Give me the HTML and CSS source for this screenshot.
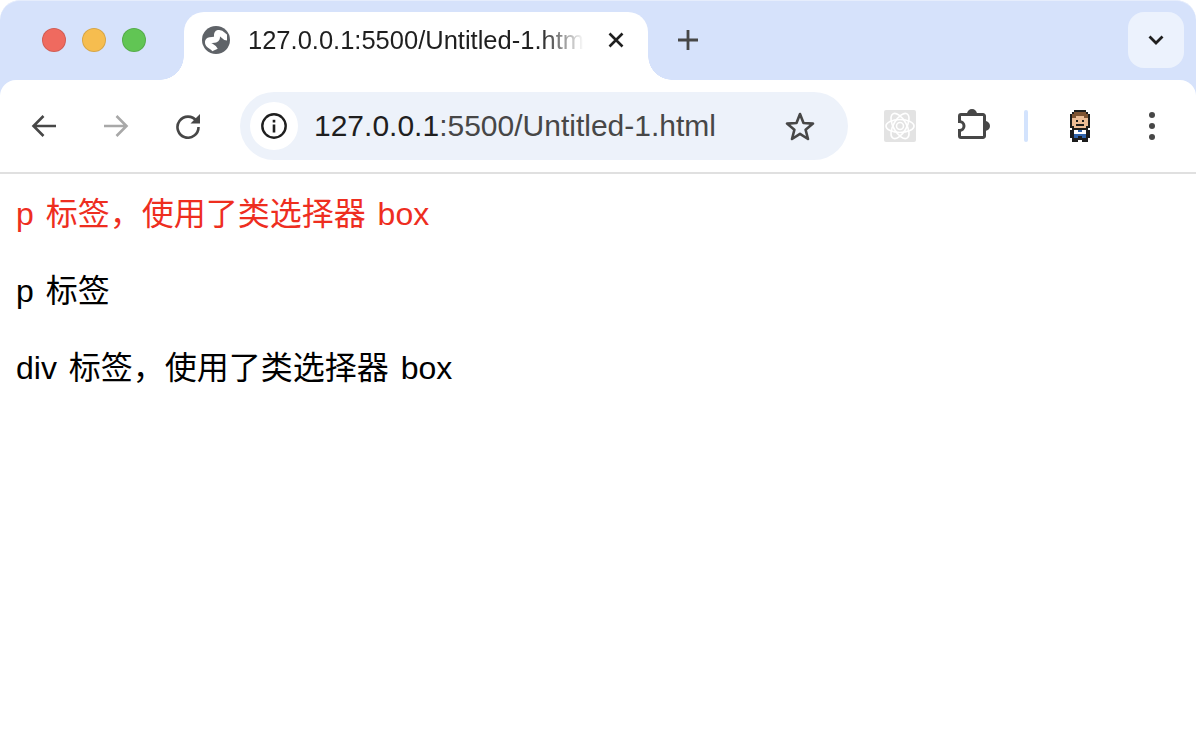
FILE: index.html
```html
<!DOCTYPE html>
<html lang="en">
<head>
    <meta charset="UTF-8">
    <meta name="viewport" content="width=device-width, initial-scale=1.0">
    <title>Untitled-1</title>
    <link rel="stylesheet" href="styles.css">
</head>
<body>
    <div class="browser-chrome">
        <div class="tab-strip">
            <div class="traffic-lights">
                <span class="light light-red"></span>
                <span class="light light-yellow"></span>
                <span class="light light-green"></span>
            </div>
            <div class="tab">
                <svg class="tab-globe" width="28" height="28" viewBox="0 0 28 28">
                    <circle cx="14" cy="14" r="14" fill="#5f6368"/>
                    <path d="M25 11.500 C21 11.500 20.500 6 16.500 7 C13 8 17 12 13.500 13.500 C10 14.500 5.500 13 6 17 C6.500 20.500 11 19.500 13 24" stroke="#fff" stroke-width="6" fill="none"/>
                </svg>
                <span class="tab-title">127.0.0.1:5500/Untitled-1.html</span>
                <svg class="tab-close" width="16" height="16" viewBox="0 0 16 16">
                    <path d="M1.500 1.500 L14.500 14.500 M14.500 1.500 L1.500 14.500" stroke="#1f1f1f" stroke-width="2.600" fill="none"/>
                </svg>
            </div>
            <div class="new-tab">
                <svg width="20" height="20" viewBox="0 0 20 20">
                    <path d="M10 0 V20 M0 10 H20" stroke="#474747" stroke-width="2.800" fill="none"/>
                </svg>
            </div>
            <div class="tab-search">
                <svg width="16" height="10" viewBox="0 0 16 10">
                    <path d="M1.500 1.500 L8 8 L14.500 1.500" stroke="#1f1f1f" stroke-width="2.800" fill="none"/>
                </svg>
            </div>
        </div>

        <div class="toolbar">
            <div class="nav-btn">
                <svg width="26" height="24" viewBox="0 0 26 24">
                    <path d="M25 12 H3 M12.500 2 L2.500 12 L12.500 22" stroke="#474747" stroke-width="2.600" fill="none"/>
                </svg>
            </div>
            <div class="nav-btn">
                <svg width="26" height="24" viewBox="0 0 26 24">
                    <path d="M1 12 H23 M13.500 2 L23.500 12 L13.500 22" stroke="#a8a8a8" stroke-width="2.600" fill="none"/>
                </svg>
            </div>
            <div class="nav-btn">
                <svg width="26" height="26" viewBox="0 0 26 26">
                    <path d="M21.500 8 A10.500 10.500 0 1 0 23.500 14" stroke="#474747" stroke-width="2.600" fill="none"/>
                    <path d="M25 1 V10.500 H15.500 Z" fill="#474747"/>
                </svg>
            </div>

            <div class="address-bar">
                <div class="site-info">
                    <svg width="26" height="26" viewBox="0 0 26 26">
                        <circle cx="13" cy="13" r="11.700" stroke="#1f1f1f" stroke-width="2.400" fill="none"/>
                        <rect x="11.700" y="11.500" width="2.600" height="8" fill="#1f1f1f"/>
                        <rect x="11.700" y="6.800" width="2.600" height="2.700" fill="#1f1f1f"/>
                    </svg>
                </div>
                <div class="url"><span class="url-host">127.0.0.1</span>:5500/Untitled-1.html</div>
                <svg class="star" width="32" height="30" viewBox="0 0 32 30">
                    <path d="M16 3 L19.500 12 L29 12.600 L21.600 18.700 L24 28 L16 22.800 L8 28 L10.400 18.700 L3 12.600 L12.500 12 Z" stroke="#474747" stroke-width="2.600" stroke-linejoin="round" fill="none"/>
                </svg>
            </div>

            <div class="ext-react">
                <svg width="32" height="32" viewBox="0 0 32 32">
                    <g stroke="#fff" stroke-width="1.600" fill="none">
                        <ellipse cx="16" cy="16" rx="14" ry="6.500"/>
                        <ellipse cx="16" cy="16" rx="14" ry="6.500" transform="rotate(60 16 16)"/>
                        <ellipse cx="16" cy="16" rx="14" ry="6.500" transform="rotate(120 16 16)"/>
                        <circle cx="16" cy="16" r="3.500"/>
                    </g>
                </svg>
            </div>
            <svg class="ext-puzzle" width="32" height="34" viewBox="0 0 32 34">
                <path d="M3 5.500 H25 A1.500 1.500 0 0 1 26.500 7 V27 A1.500 1.500 0 0 1 25 28.500 H3 A1.500 1.500 0 0 1 1.500 27 V21.500 A4.500 4.500 0 0 0 1.500 12.500 V7 A1.500 1.500 0 0 1 3 5.500 Z" stroke="#474747" stroke-width="3" fill="none"/>
                <path d="M9 5 A5 5 0 0 1 19 5 Z M27 12 A5 5 0 0 1 27 22 Z" fill="#474747"/>
            </svg>
            <div class="toolbar-sep"></div>
            <svg class="avatar" width="20" height="32" viewBox="0 0 10 16" shape-rendering="crispEdges">
                <path d="M2 0h6v1h1v1h1v7h-1v1h1v4H9v2H6v-1H4v1H1v-2H0v-4h1V9H0V2h1V1h1z" fill="#1c1c1c"/>
                <path d="M2 1h6v1h1v2H7V3H3v1H1V2h1z" fill="#7d5230"/>
                <path d="M1 4h2V3h4v1h2v4H8v1H2V8H1z" fill="#ebbb94"/>
                <path d="M3 5h1v1H3zM6 5h1v1H6zM3 7h4v1H3z" fill="#1c1c1c"/>
                <path d="M2 10h6v3H2z" fill="#fff"/>
                <path d="M4 10h2v1H4zM2 12h6v2H6v-1H4v1H2z" fill="#2f62a8"/>
            </svg>
            <svg class="menu-dots" width="8" height="30" viewBox="0 0 8 30">
                <circle cx="4" cy="4" r="3" fill="#474747"/>
                <circle cx="4" cy="15" r="3" fill="#474747"/>
                <circle cx="4" cy="26" r="3" fill="#474747"/>
            </svg>
        </div>
    </div>

    <div class="content">
        <p class="box">p 标签，使用了类选择器 box</p>
        <p>p 标签</p>
        <div>div 标签，使用了类选择器 box</div>
    </div>
</body>
</html>
```

FILE: styles.css
```css
* {
    margin: 0;
    padding: 0;
    box-sizing: border-box;
}

html, body {
    height: 100%;
    overflow: hidden;
}

body {
    font-family: 'Liberation Sans', 'Noto Sans CJK SC', sans-serif;
    background: #fff;
    color: #000;
}

.browser-chrome {
    background: #d6e2fb;
    border-top: 1px solid #e6edfc;
    border-radius: 20px 20px 0 0;
}

.tab-strip {
    display: flex;
    align-items: flex-start;
    height: 79px;
    padding-top: 11px;
}

.traffic-lights {
    display: flex;
    align-items: center;
    gap: 16px;
    width: 184px;
    height: 56px;
    padding-left: 42px;
}

.light {
    width: 24px;
    height: 24px;
    border-radius: 50%;
    border: 1px solid rgba(0, 0, 0, 0.12);
}

.light-red { background: #ef6a5f; }
.light-yellow { background: #f6bd4f; }
.light-green { background: #61c554; }

.tab {
    position: relative;
    display: flex;
    align-items: center;
    width: 464px;
    height: 68px;
    padding: 0 0 12px 18px;
    background: #fff;
    border-radius: 20px 20px 0 0;
}

.tab::before,
.tab::after {
    content: '';
    position: absolute;
    bottom: 0;
    width: 24px;
    height: 24px;
    background: radial-gradient(circle at var(--cx) 0, #d6e2fb 23.500px, #fff 24px);
}

.tab::before {
    --cx: 0;
    left: -24px;
}

.tab::after {
    --cx: 100%;
    right: -24px;
}

.tab-globe {
    flex-shrink: 0;
}

.tab-title {
    width: 336px;
    margin-left: 18px;
    font-size: 25.500px;
    color: #1f1f1f;
    white-space: nowrap;
    overflow: hidden;
    -webkit-mask-image: linear-gradient(to right, #000 292px, transparent 336px);
    mask-image: linear-gradient(to right, #000 292px, transparent 336px);
}

.tab-close {
    margin-left: 24px;
}

.new-tab {
    display: flex;
    align-items: center;
    justify-content: center;
    width: 80px;
    height: 56px;
}

.tab-search {
    display: flex;
    align-items: center;
    justify-content: center;
    width: 56px;
    height: 56px;
    margin: 0 12px 0 auto;
    background: #ecf2fd;
    border-radius: 16px;
}

.toolbar {
    display: flex;
    align-items: center;
    height: 94px;
    padding-left: 8px;
    background: #fff;
    border-bottom: 2px solid #e0e0e0;
    border-radius: 16px 16px 0 0;
}

.nav-btn {
    display: flex;
    align-items: center;
    justify-content: center;
    width: 72px;
}

.address-bar {
    display: flex;
    align-items: center;
    width: 608px;
    height: 68px;
    margin-left: 16px;
    padding-left: 10px;
    background: #edf2fa;
    border-radius: 34px;
}

.site-info {
    display: flex;
    align-items: center;
    justify-content: center;
    width: 48px;
    height: 48px;
    background: #fff;
    border-radius: 50%;
}

.url {
    margin-left: 16px;
    font-size: 30px;
    color: #474747;
    white-space: nowrap;
}

.url-host {
    color: #1f1f1f;
}

.star {
    margin-left: auto;
    margin-right: 32px;
}

.ext-react {
    width: 32px;
    height: 32px;
    margin-left: 36px;
    background: #e3e3e3;
    border-radius: 2px;
}

.ext-react svg {
    display: block;
}

.ext-puzzle {
    margin-left: 42px;
}

.toolbar-sep {
    width: 4px;
    height: 32px;
    margin-left: 34px;
    background: #d3e3fd;
    border-radius: 2px;
}

.avatar {
    margin-left: 42px;
}

.menu-dots {
    margin-left: 58px;
}

.content {
    padding: 18px 16px;
    font-size: 32px;
    line-height: 45px;
    word-spacing: 3px;
}

.content p {
    margin-bottom: 32px;
}

.box {
    color: #ee2e1f;
}
```
